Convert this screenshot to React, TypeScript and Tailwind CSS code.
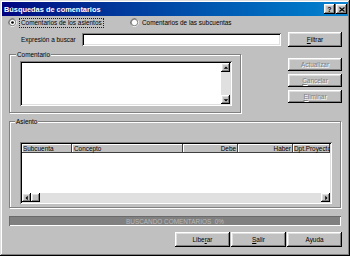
import type { ReactNode } from 'react';

const raised =
  'bg-[#c0c0c0] shadow-[inset_-1px_-1px_#000,inset_1px_1px_#fff,inset_-2px_-2px_#808080,inset_2px_2px_#dfdfdf]';
const sunken =
  'bg-white shadow-[inset_1px_1px_#808080,inset_-1px_-1px_#fff,inset_2px_2px_#000,inset_-2px_-2px_#dfdfdf]';
const group = 'border border-[#808080] shadow-[1px_1px_#fff,inset_1px_1px_#fff]';
const disabledText = 'text-[#808080] [text-shadow:1px_1px_#fff]';

function Button({ children, className, disabled }: { children: ReactNode; className: string; disabled?: boolean }) {
  return (
    <div className={`${raised} ${className} flex items-center justify-center ${disabled ? disabledText : 'text-black'}`}>
      {children}
    </div>
  );
}

function Radio({ checked }: { checked?: boolean }) {
  return (
    <svg width="9" height="9" viewBox="0 0 12 12" className="shrink-0">
      <path d="M8.5 1.2 A5.5 5.5 0 0 0 1.2 8.5" fill="none" stroke="#808080" strokeWidth="1.2" />
      <path d="M3.5 10.8 A5.5 5.5 0 0 0 10.8 3.5" fill="none" stroke="#fff" strokeWidth="1.2" />
      <circle cx="6" cy="6" r="4.3" fill="#fff" stroke="#000" strokeWidth="0.6" />
      {checked && <circle cx="6" cy="6" r="1.8" fill="#000" />}
    </svg>
  );
}

function Arrow({ dir }: { dir: 'up' | 'down' | 'left' | 'right' }) {
  const pts = {
    up: '1,5 4,2 7,5',
    down: '1,3 4,6 7,3',
    left: '5,1 2,4 5,7',
    right: '3,1 6,4 3,7',
  }[dir];
  return (
    <div className={`${raised} w-[9px] h-[9px] flex items-center justify-center shrink-0`}>
      <svg width="6" height="6" viewBox="0 0 8 8">
        <polygon points={pts} fill="#000" />
      </svg>
    </div>
  );
}

export default function App() {
  return (
    <div className="w-[350px] h-[256px] overflow-hidden flex flex-col bg-[#c0c0c0] text-[6.4px] leading-[9px] font-['Liberation_Sans',Arial,sans-serif] text-black shadow-[inset_-1px_-1px_#000,inset_1px_1px_#dfdfdf,inset_-2px_-2px_#808080,inset_2px_2px_#fff]">
      {/* title bar */}
      <div className="mx-[2px] mt-[2px] h-[14px] flex items-center bg-gradient-to-r from-[#000080] to-[#1084d0] pl-[2px] pr-[1px]">
        <span className="text-white font-bold text-[7.4px]">Búsquedas de comentarios</span>
        <div className="ml-auto flex gap-[1px]">
          <div className={`${raised} w-[11px] h-[10px] flex items-center justify-center font-bold text-[7px] leading-none`}>?</div>
          <div className={`${raised} w-[11px] h-[10px] flex items-center justify-center`}>
            <svg width="6" height="5" viewBox="0 0 6 5">
              <path d="M0.5 0.5 L5.5 4.5 M5.5 0.5 L0.5 4.5" stroke="#000" strokeWidth="1.2" />
            </svg>
          </div>
        </div>
      </div>

      {/* radios */}
      <div className="mt-[1px] h-[11px] flex items-center">
        <div className="ml-[8px] w-[122px] flex items-center">
          <Radio checked />
          <span className="ml-[2px] px-[1px] h-[10px] flex items-center border border-dotted border-[#202020]">Comentarios de los asientos</span>
        </div>
        <Radio />
        <span className="ml-[3px]">Comentarios de las subcuentas</span>
      </div>

      {/* search */}
      <div className="mt-[4px] h-[15px] flex items-center">
        <span className="ml-[21px] w-[61px]">Expresión a buscar</span>
        <div className={`${sunken} w-[199px] h-[13px]`} />
        <Button className="ml-[7px] w-[54px] h-[15px]">
          <u>F</u>iltrar
        </Button>
      </div>

      {/* comentario */}
      <div className="mt-[7px] flex items-start">
        <div className={`${group} ml-[9px] w-[232px] h-[59px]`}>
          <div className="-mt-[5px] ml-[6px] w-fit px-[1px] h-[9px] bg-[#c0c0c0]">Comentario</div>
          <div className={`${sunken} ml-[10px] mt-[2px] w-[212px] h-[45px] flex p-[2px]`}>
            <div className="flex-1" />
            <div className="w-[9px] flex flex-col bg-[#e0e0e0]">
              <Arrow dir="up" />
              <div className="flex-1" />
              <Arrow dir="down" />
            </div>
          </div>
        </div>
        <div className="ml-[47px] mt-[4px] flex flex-col gap-[3px]">
          <Button disabled className="w-[54px] h-[13px]">Actualizar</Button>
          <Button disabled className="w-[54px] h-[13px]">
            <u>C</u>ancelar
          </Button>
          <Button disabled className="w-[54px] h-[13px]">
            <u>E</u>liminar
          </Button>
        </div>
      </div>

      {/* asiento */}
      <div className={`${group} mt-[8px] ml-[9px] w-[332px] h-[87px]`}>
        <div className="-mt-[5px] ml-[5px] w-fit px-[1px] h-[9px] bg-[#c0c0c0]">Asiento</div>
        <div className={`${sunken} ml-[10px] mt-[16px] w-[312px] h-[62px] flex flex-col p-[2px]`}>
          <div className="h-[9px] flex bg-[#c0c0c0] whitespace-nowrap">
            <div className="w-[50px] pl-[1px] shadow-[inset_-1px_-1px_#404040,inset_1px_1px_#fff]">Subcuenta</div>
            <div className="w-[111px] pl-[2px] shadow-[inset_-1px_-1px_#404040,inset_1px_1px_#fff]">Concepto</div>
            <div className="w-[55px] pr-[2px] text-right shadow-[inset_-1px_-1px_#404040,inset_1px_1px_#fff]">Debe</div>
            <div className="w-[55px] pr-[2px] text-right shadow-[inset_-1px_-1px_#404040,inset_1px_1px_#fff]">Haber</div>
            <div className="flex-1 pl-[1px] overflow-hidden shadow-[inset_-1px_-1px_#404040,inset_1px_1px_#fff]">Dpt.Proyecto</div>
          </div>
          <div className="flex-1 bg-white" />
          <div className="h-[9px] flex bg-[#e0e0e0]">
            <Arrow dir="left" />
            <div className={`${raised} w-[9px] h-[9px]`} />
            <div className="flex-1" />
            <Arrow dir="right" />
          </div>
        </div>
      </div>

      {/* status */}
      <div className="mt-[8px] ml-[9px] w-[332px] h-[10px] flex items-center justify-center bg-[#808080] shadow-[inset_1px_1px_#6a6a6a,inset_-1px_-1px_#fff] text-[#b8b8b8] whitespace-pre">
        BUSCANDO COMENTARIOS  0%
      </div>

      {/* bottom buttons */}
      <div className="mt-[6px] h-[15px] flex justify-end gap-[1px] pr-[8px]">
        <Button className="w-[55px] h-[15px]">
          Libe<u>r</u>ar
        </Button>
        <Button className="w-[55px] h-[15px]">
          <u>S</u>alir
        </Button>
        <Button className="w-[55px] h-[15px]">Ayuda</Button>
      </div>
    </div>
  );
}
